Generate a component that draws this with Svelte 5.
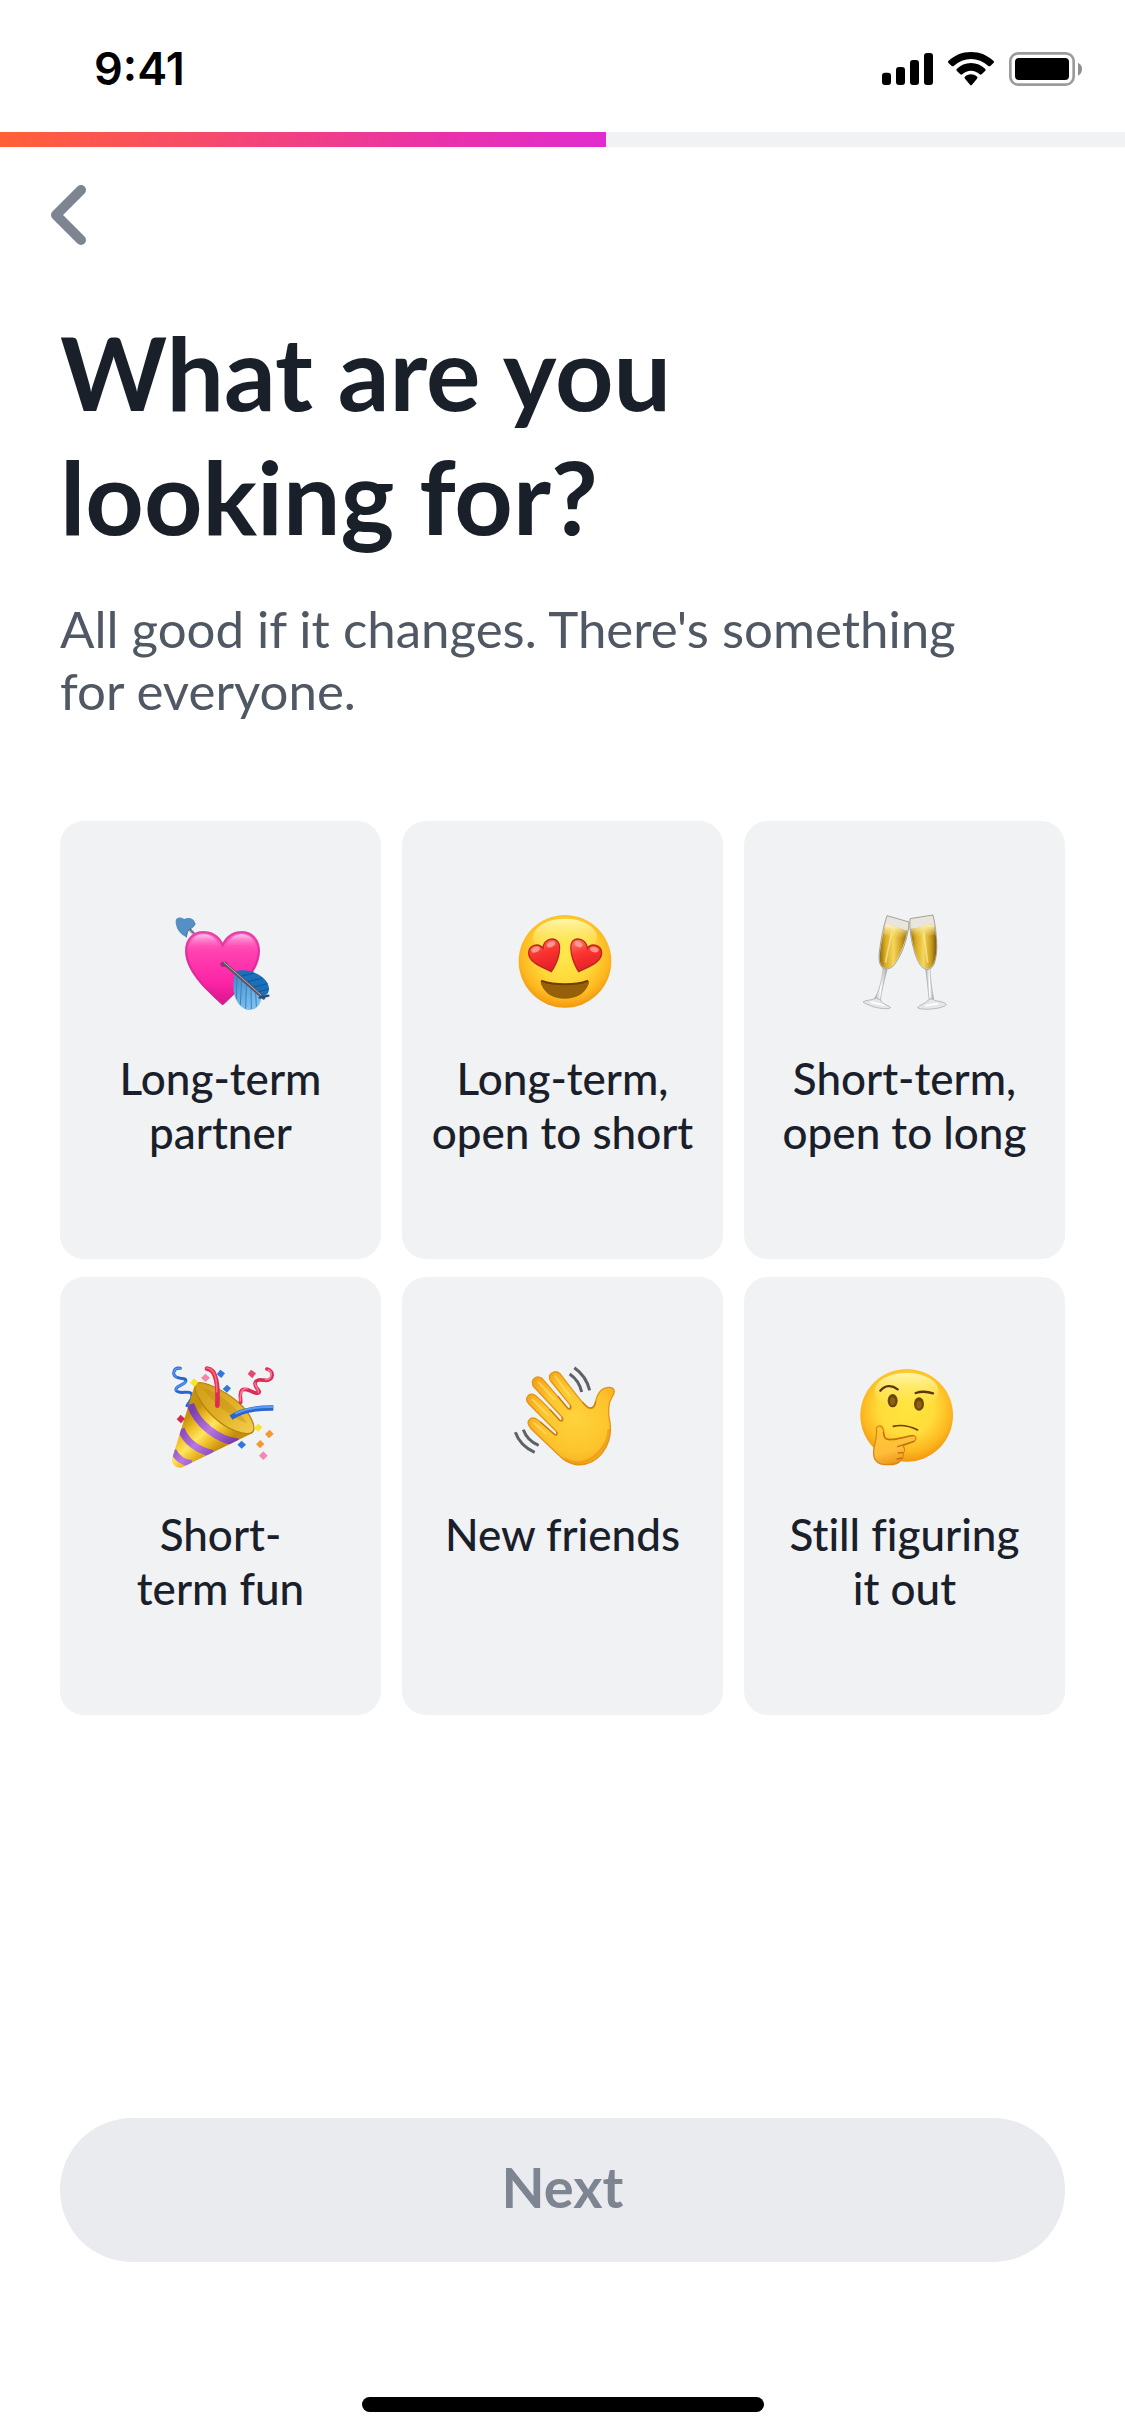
<script>
  const progress = 53.87;

  const options = [
    { icon: 'cupid', lines: ['Long-term', 'partner'] },
    { icon: 'heart-eyes', lines: ['Long-term,', 'open to short'] },
    { icon: 'glasses', lines: ['Short-term,', 'open to long'] },
    { icon: 'party', lines: ['Short-', 'term fun'] },
    { icon: 'wave', lines: ['New friends'] },
    { icon: 'thinking', lines: ['Still figuring', 'it out'] }
  ];

  let selected = $state(null);
</script>

{#snippet cupid()}
  <svg class="emoji" viewBox="-10 0 360 360" aria-hidden="true">
    <defs>
      <linearGradient id="cupid-fill" x1="0" y1="0" x2="0" y2="1">
        <stop offset="0" stop-color="#ff6fc6" />
        <stop offset="0.3" stop-color="#ff3fb0" />
        <stop offset="0.7" stop-color="#fb24a4" />
        <stop offset="1" stop-color="#d9128e" />
      </linearGradient>
      <linearGradient id="cupid-shine" x1="0" y1="0" x2="0" y2="1">
        <stop offset="0" stop-color="#ffc3ea" />
        <stop offset="1" stop-color="#ff5abb" stop-opacity="0" />
      </linearGradient>
      <linearGradient id="cupid-feather" x1="0" y1="0" x2="0.4" y2="1">
        <stop offset="0" stop-color="#3d87c6" />
        <stop offset="1" stop-color="#7cc0ef" />
      </linearGradient>
    </defs>
    <path d="M68 66 L92 90" stroke="#6d6f7c" stroke-width="9" />
    <path d="M72 74 L86 88" stroke="#d5d7dd" stroke-width="3" />
    <path d="M66 97 C44 86 34 68 34 48 C34 36 50 34 60 42 C72 36 90 40 92 54 C92 64 80 70 72 76 C68 82 68 92 66 97Z" fill="#5590c4" />
    <path d="M66 97 C68 88 68 80 74 74 C84 68 92 62 92 54" fill="none" stroke="#3c6fa3" stroke-width="3" />
    <path d="M175 301 C140 268 62 205 62 138 C62 100 86 78 116 78 C145 78 165 92 175 113 C186 92 205 78 232 78 C264 78 287 102 287 137 C287 205 210 268 175 301Z" fill="url(#cupid-fill)" />
    <path d="M175 296 C140 264 66 203 66 138 C66 102 89 82 116 82 C145 82 165 98 175 121 C186 98 205 82 232 82 C262 82 283 104 283 137 C283 203 208 266 175 296Z" fill="none" stroke="#c92a90" stroke-width="6" opacity="0.6" />
    <path d="M78 130 C78 100 96 88 116 88 C144 88 158 104 166 128 C140 118 106 118 78 130Z" fill="url(#cupid-shine)" />
    <path d="M184 128 C192 104 208 88 232 88 C254 88 272 102 272 130 C246 116 212 116 184 128Z" fill="url(#cupid-shine)" />
    <ellipse cx="179" cy="178" rx="11" ry="8" fill="#a10e6b" opacity="0.7" />
    <path d="M213 199 C250 186 312 212 314 250 C314 260 312 266 304 270 L292 276Z" fill="#1a70bb" />
    <path d="M210 203 L290 276 C292 296 276 314 256 315 C228 314 206 282 207 240Z" fill="url(#cupid-feather)" />
    <g fill="none" stroke="#3a82bd" stroke-width="3">
      <path d="M218 214 L216 282" /><path d="M232 226 L228 300" /><path d="M246 239 L244 311" />
      <path d="M260 252 L261 312" /><path d="M274 264 L276 304" />
    </g>
    <g fill="none" stroke="#0f5596" stroke-width="3">
      <path d="M232 213 L268 205" /><path d="M250 230 L294 220" /><path d="M268 246 L310 236" /><path d="M284 260 L313 252" />
    </g>
    <path d="M178 173 L298 279" stroke="#5c5360" stroke-width="10" stroke-linecap="round" />
    <path d="M178 171 L290 270" stroke="#c4a8b8" stroke-width="3" stroke-linecap="round" />
    <path d="M286 278 L312 272" stroke="#1b4f82" stroke-width="7" stroke-linecap="round" />
  </svg>
{/snippet}

{#snippet heartEyes()}
  <svg class="emoji" viewBox="-5 0 360 360" aria-hidden="true">
    <defs>
      <radialGradient id="love-face" cx="0.5" cy="0.42" r="0.6">
        <stop offset="0" stop-color="#ffe84d" />
        <stop offset="0.5" stop-color="#ffd83a" />
        <stop offset="0.8" stop-color="#fdb71f" />
        <stop offset="1" stop-color="#ee920f" />
      </radialGradient>
      <linearGradient id="love-shine" x1="0" y1="0" x2="0" y2="1">
        <stop offset="0" stop-color="#fff7ae" />
        <stop offset="1" stop-color="#ffe84d" stop-opacity="0" />
      </linearGradient>
      <linearGradient id="love-eye" x1="0.3" y1="0" x2="0.6" y2="1">
        <stop offset="0" stop-color="#ff7468" />
        <stop offset="0.4" stop-color="#fb3530" />
        <stop offset="1" stop-color="#e31d28" />
      </linearGradient>
    </defs>
    <circle cx="181" cy="169" r="139" fill="url(#love-face)" />
    <ellipse cx="181" cy="97" rx="96" ry="56" fill="url(#love-shine)" />
    <path d="M140 200 C118 188 72 174 72 144 C72 120 102 112 115 130 C116 108 136 98 152 104 C178 116 160 172 140 200Z" fill="url(#love-eye)" stroke="#b9261b" stroke-width="4" />
    <path d="M222 200 C204 172 186 116 210 104 C226 98 246 108 248 130 C260 112 291 120 291 144 C291 174 244 188 222 200Z" fill="url(#love-eye)" stroke="#b9261b" stroke-width="4" />
    <g fill="#ffb3a5" opacity="0.75">
      <ellipse cx="93" cy="134" rx="13" ry="8" transform="rotate(-25 93 134)" />
      <ellipse cx="139" cy="118" rx="13" ry="8" transform="rotate(-25 139 118)" />
      <ellipse cx="222" cy="118" rx="12" ry="8" transform="rotate(25 222 118)" />
      <ellipse cx="269" cy="134" rx="13" ry="8" transform="rotate(15 269 134)" />
    </g>
    <path d="M112 227 C150 240 212 240 248 227 C254 226 254 232 251 239 C240 266 214 281 180 281 C146 281 122 266 110 239 C107 231 108 226 112 227Z" fill="#96600b" />
    <path d="M112 228 C150 241 212 241 248 228" fill="none" stroke="#6e3d05" stroke-width="6" stroke-linecap="round" />
  </svg>
{/snippet}

{#snippet glasses()}
  <svg class="emoji" viewBox="-14 15 360 360" aria-hidden="true">
    <defs>
      <linearGradient id="wine" x1="0" y1="0" x2="1" y2="0">
        <stop offset="0" stop-color="#8e6a10" />
        <stop offset="0.2" stop-color="#d9ab22" />
        <stop offset="0.5" stop-color="#f5d65c" />
        <stop offset="0.8" stop-color="#c99a1c" />
        <stop offset="1" stop-color="#7c5a0c" />
      </linearGradient>
      <linearGradient id="stem" x1="0" y1="0" x2="1" y2="0">
        <stop offset="0" stop-color="#a9aaac" />
        <stop offset="0.5" stop-color="#ffffff" />
        <stop offset="1" stop-color="#a2a3a6" />
      </linearGradient>
      <linearGradient id="foam" x1="0" y1="0" x2="0" y2="1">
        <stop offset="0" stop-color="#fff6bf" />
        <stop offset="1" stop-color="#f2d66a" stop-opacity="0" />
      </linearGradient>
    </defs>
    <g>
      <path d="M100 204 C98 240 86 280 74 296 L92 302 C94 276 106 236 112 208Z" fill="url(#stem)" stroke="#a7a8aa" stroke-width="2" />
      <path d="M40 306 C50 298 68 302 80 294 C90 300 94 298 96 306 C104 314 120 318 123 323 C116 330 70 326 40 306Z" fill="#e6e7e8" stroke="#9fa0a3" stroke-width="2" />
      <path d="M66 307 L102 315" stroke="#ffffff" stroke-width="5" stroke-linecap="round" />
      <path d="M112 47 L178 66 C178 98 160 160 138 188 C128 206 112 210 100 204 C88 196 86 176 90 150 C94 116 102 76 112 47Z" fill="#e8e5dc" stroke="#a5a195" stroke-width="3" />
      <path d="M107 76 C128 72 150 88 173 92 C166 126 152 164 136 188 C126 204 112 208 101 202 C90 194 88 176 92 150 C96 122 101 96 107 76Z" fill="url(#wine)" />
      <path d="M107 76 C128 72 150 88 173 92 L167 116 L102 104Z" fill="url(#foam)" />
      <path d="M126 100 C120 130 112 160 108 186" fill="none" stroke="#fff2a6" stroke-width="5" stroke-linecap="round" opacity="0.6" />
    </g>
    <g>
      <path d="M228 206 C232 240 236 270 238 298 L252 298 C246 268 242 236 241 206Z" fill="url(#stem)" stroke="#a7a8aa" stroke-width="2" />
      <path d="M204 324 C208 314 228 312 236 300 C244 294 252 298 256 302 C270 304 286 306 290 314 C280 326 226 332 204 324Z" fill="#e6e7e8" stroke="#9fa0a3" stroke-width="2" />
      <path d="M228 317 L264 311" stroke="#ffffff" stroke-width="5" stroke-linecap="round" />
      <path d="M181 56 L250 45 C258 78 264 130 260 162 C256 192 250 206 234 208 C220 208 210 196 200 172 C188 140 178 90 181 56Z" fill="#e8e5dc" stroke="#a5a195" stroke-width="3" />
      <path d="M183 86 C206 90 232 66 253 76 C260 106 262 134 259 162 C255 190 248 204 234 206 C221 206 211 194 202 172 C192 146 185 114 183 86Z" fill="url(#wine)" />
      <path d="M183 86 C206 90 232 66 253 76 L257 104 L187 112Z" fill="url(#foam)" />
      <path d="M222 100 C226 130 230 160 234 186" fill="none" stroke="#fff2a6" stroke-width="5" stroke-linecap="round" opacity="0.6" />
    </g>
  </svg>
{/snippet}

{#snippet party()}
  <svg class="emoji" viewBox="4 18 360 360" aria-hidden="true">
    <defs>
      <linearGradient id="cone" gradientUnits="userSpaceOnUse" x1="80" y1="190" x2="170" y2="290">
        <stop offset="0" stop-color="#c8930c" />
        <stop offset="0.25" stop-color="#f0bf2a" />
        <stop offset="0.5" stop-color="#ffe65e" />
        <stop offset="0.75" stop-color="#eab822" />
        <stop offset="1" stop-color="#c48d0c" />
      </linearGradient>
      <linearGradient id="band" gradientUnits="userSpaceOnUse" x1="80" y1="190" x2="190" y2="290">
        <stop offset="0" stop-color="#7b3fae" />
        <stop offset="0.5" stop-color="#b877e2" />
        <stop offset="1" stop-color="#7c3fb0" />
      </linearGradient>
      <linearGradient id="mouth" x1="0" y1="0" x2="1" y2="1">
        <stop offset="0" stop-color="#d19d18" />
        <stop offset="0.5" stop-color="#e0ae26" />
        <stop offset="1" stop-color="#f5cf4c" />
      </linearGradient>
      <clipPath id="cone-shape">
        <path d="M106 88 C112 140 180 222 279 234 L68 337 C52 342 36 330 37 312Z" />
      </clipPath>
    </defs>
    <path d="M62 40 C42 36 36 58 50 66 C62 74 82 66 78 80 C72 92 44 92 49 106 C58 122 96 100 97 122 C98 136 88 140 82 152" fill="none" stroke="#2767d2" stroke-width="9" stroke-linecap="round" />
    <path d="M62 40 C42 36 36 58 50 66 M78 80 C72 92 44 92 49 106" fill="none" stroke="#5b98f3" stroke-width="4" stroke-linecap="round" />
    <path d="M106 88 C112 140 180 222 279 234 L68 337 C52 342 36 330 37 312Z" fill="url(#cone)" />
    <g clip-path="url(#cone-shape)" fill="none" stroke="url(#band)">
      <path d="M92 148 C112 206 172 256 236 262" stroke-width="23" />
      <path d="M64 222 C80 262 116 286 160 296" stroke-width="22" />
      <path d="M40 286 C50 308 70 322 96 326" stroke-width="20" />
    </g>
    <path d="M108 86 C124 74 190 102 236 142 C274 176 292 220 278 232 C258 244 204 226 162 186 C122 148 98 100 108 86Z" fill="url(#mouth)" stroke="#b58610" stroke-width="4" />
    <path d="M128 98 C160 104 226 146 262 204 C222 192 160 144 128 98Z" fill="#b68610" opacity="0.35" />
    <path d="M142 41 C170 42 176 90 173 152" fill="none" stroke="#dc2e55" stroke-width="14" stroke-linecap="round" />
    <path d="M142 39 C166 42 172 76 171 110" fill="none" stroke="#ff6785" stroke-width="5" stroke-linecap="round" />
    <path d="M214 188 C242 168 280 158 341 159" fill="none" stroke="#2b66cc" stroke-width="16" />
    <path d="M226 176 C254 162 290 154 341 156" fill="none" stroke="#5e9bf5" stroke-width="6" />
    <path d="M322 42 C346 48 340 78 318 76 C302 74 290 72 286 84 C284 100 306 108 296 114 C278 118 264 94 246 106 C238 114 244 128 243 142" fill="none" stroke="#d92c58" stroke-width="11" stroke-linecap="round" />
    <path d="M326 44 C340 52 336 74 318 74 M286 84 C286 96 300 106 296 112 M262 100 C242 102 242 118 242 138" fill="none" stroke="#ff7592" stroke-width="5" stroke-linecap="round" />
    <g>
      <path d="M103 70l13 12-12 14-13-13z" fill="#f5e52c" />
      <path d="M137 56l14 12-13 13-14-12z" fill="#f587a9" />
      <path d="M182 44l14 11-11 14-14-11z" fill="#2f76df" />
      <path d="M202 89l12 11-12 13-13-11z" fill="#2f76df" />
      <path d="M274 44l15 11-11 15-14-13z" fill="#e44973" />
      <path d="M63 179l13 12-12 14-13-12z" fill="#d3294f" />
      <path d="M296 206l12 11-12 13-13-12z" fill="#f5e52c" />
      <path d="M330 224l12 13-14 13-12-13z" fill="#f29a32" />
      <path d="M302 255l12 12-13 13-12-12z" fill="#f29a32" />
      <path d="M246 257l13 12-13 12-13-12z" fill="#2f76df" />
      <path d="M311 289l13 13-13 13-13-13z" fill="#f587b5" />
    </g>
  </svg>
{/snippet}

{#snippet wave()}
  <svg class="emoji" viewBox="-5 18 360 360" aria-hidden="true">
    <defs>
      <radialGradient id="hand" gradientUnits="userSpaceOnUse" cx="215" cy="190" r="170">
        <stop offset="0" stop-color="#ffd33c" />
        <stop offset="0.6" stop-color="#fdc42c" />
        <stop offset="1" stop-color="#f3a21a" />
      </radialGradient>
    </defs>
    <g fill="none" stroke="#5f6165" stroke-width="9">
      <path d="M209 38 C232 54 248 76 255 106" />
      <path d="M195 57 C214 70 226 88 231 111" />
      <path d="M32 232 C42 260 62 280 90 292" />
      <path d="M56 224 C64 246 80 262 102 271" />
    </g>
    <path d="M76 192 C88 184 98 194 108 202 L150 238 C158 244 160 236 156 230 L72 146 C58 130 72 112 90 120 C104 130 142 170 166 196 C174 202 178 194 172 186 L88 96 C74 76 94 58 112 70 L190 160 C198 166 202 158 198 152 L138 78 C126 58 150 42 166 56 C190 88 222 130 244 154 C256 166 268 162 272 144 C276 122 286 96 316 97 C334 100 330 116 322 126 C308 148 310 176 316 204 C324 258 296 300 262 320 C226 338 190 328 166 304 L80 222 C70 210 66 200 76 192Z" fill="url(#hand)" stroke="#e39514" stroke-width="4" stroke-linejoin="round" />
    <g fill="none" stroke="#c97b10" stroke-width="4" stroke-linecap="round">
      <path d="M108 202 L150 239 Q158 242 156 232" />
      <path d="M136 164 L166 197 Q174 200 172 188" />
      <path d="M160 124 L190 161 Q198 164 197 153" />
      <path d="M234 142 Q264 176 273 140" />
    </g>
    <g fill="none" stroke="#ffe06a" stroke-width="7" stroke-linecap="round" opacity="0.6">
      <path d="M88 204 L124 236" /><path d="M84 134 L130 180" /><path d="M102 82 L150 134" /><path d="M152 64 L196 124" />
    </g>
    <path d="M182 312 C236 348 310 290 312 226" fill="none" stroke="#e38f12" stroke-width="8" stroke-linecap="round" opacity="0.55" />
  </svg>
{/snippet}

{#snippet thinking()}
  <svg class="emoji" viewBox="-14 18 360 360" aria-hidden="true">
    <defs>
      <radialGradient id="think-face" cx="0.5" cy="0.42" r="0.6">
        <stop offset="0" stop-color="#ffe53c" />
        <stop offset="0.5" stop-color="#ffdc3a" />
        <stop offset="0.8" stop-color="#fdb71f" />
        <stop offset="1" stop-color="#ee920f" />
      </radialGradient>
      <linearGradient id="think-shine" x1="0" y1="0" x2="0" y2="1">
        <stop offset="0" stop-color="#fff7ae" />
        <stop offset="1" stop-color="#ffe84d" stop-opacity="0" />
      </linearGradient>
      <linearGradient id="think-hand" x1="0" y1="0" x2="0.3" y2="1">
        <stop offset="0" stop-color="#ffca35" />
        <stop offset="0.7" stop-color="#ffbe3a" />
        <stop offset="1" stop-color="#f09a1e" />
      </linearGradient>
    </defs>
    <circle cx="171" cy="181" r="139" fill="url(#think-face)" />
    <ellipse cx="171" cy="108" rx="96" ry="54" fill="url(#think-shine)" />
    <ellipse cx="129" cy="137" rx="15" ry="20" fill="#6b4507" />
    <ellipse cx="129" cy="139" rx="8" ry="12" fill="#8d6112" />
    <ellipse cx="208" cy="147" rx="15" ry="20" fill="#6b4507" />
    <ellipse cx="208" cy="149" rx="8" ry="12" fill="#8d6112" />
    <path d="M92 107 C106 90 126 89 144 103" fill="none" stroke="#5d3505" stroke-width="7" stroke-linecap="round" />
    <path d="M198 114 C214 109 232 109 250 115" fill="none" stroke="#5d3505" stroke-width="7" stroke-linecap="round" />
    <path d="M131 214 C156 208 182 214 204 225" fill="none" stroke="#6b3d08" stroke-width="5" stroke-linecap="round" />
    <path d="M80 220 C86 208 98 212 101 224 C104 238 100 248 110 252 C134 256 164 246 188 241 C202 242 202 254 190 261 L160 273 C166 280 166 290 160 296 C164 304 160 312 152 316 C146 328 120 330 100 328 C80 326 70 310 72 288 C74 264 84 246 80 220Z" fill="url(#think-hand)" stroke="#d98816" stroke-width="4" stroke-linejoin="round" />
    <g fill="none" stroke="#c26f10" stroke-width="4" stroke-linecap="round">
      <path d="M101 232 C103 250 110 256 126 254 C150 252 170 244 190 242" />
      <path d="M144 275 L192 259" /><path d="M146 294 L160 293" /><path d="M142 312 L156 309" />
    </g>
  </svg>
{/snippet}

<main class="screen">
  <header class="status">
    <time class="clock">9:41</time>
    <div class="indicators">
      <svg width="51" height="34" viewBox="66 66 153 102" role="img" aria-label="Signal strength">
        <rect x="66" y="128" width="27" height="37" rx="9" />
        <rect x="108" y="111" width="27" height="54" rx="9" />
        <rect x="150" y="90" width="27" height="75" rx="9" />
        <rect x="192" y="69" width="27" height="96" rx="9" />
      </svg>
      <svg width="46" height="34" viewBox="264 66 138 102" role="img" aria-label="Wi-Fi">
        <path d="M333 66 C360 66 382 76 401 93 Q403 96 401 98 L391 108 Q388 110 385 108 C370 94 352 87 333 87 C314 87 296 94 281 108 Q278 110 275 108 L265 98 Q263 96 265 93 C284 76 306 66 333 66Z" />
        <path d="M333 99 C350 99 364 106 376 117 Q378 120 376 122 L365 133 Q362 135 359 133 C351 126 343 122 333 122 C323 122 315 126 307 133 Q304 135 301 133 L290 122 Q288 120 290 117 C302 106 316 99 333 99Z" />
        <path d="M333 133 C341 133 347 136 352 141 Q353 144 351 146 L336 164 Q333 167 330 164 L315 146 Q313 144 314 141 C319 136 325 133 333 133Z" />
      </svg>
      <svg width="74" height="34" viewBox="447 66 222 102" role="img" aria-label="Battery full">
        <rect x="451" y="70" width="190" height="94" rx="24" fill="none" stroke="#9b9b9b" stroke-width="8" />
        <rect x="465" y="84" width="162" height="66" rx="12" />
        <path d="M654 98 Q666 104 666 117 Q666 131 654 137Z" fill="#8f8f8f" />
      </svg>
    </div>
  </header>

  <div class="progress" role="progressbar" aria-label="Profile setup" aria-valuenow={progress} aria-valuemin="0" aria-valuemax="100">
    <div class="bar" style="width: {progress}%"></div>
  </div>

  <nav class="nav">
    <button class="back" type="button" aria-label="Back">
      <svg width="36" height="60" viewBox="0 0 36 60" aria-hidden="true">
        <path d="M31 5 L6 30 L31 55" fill="none" stroke="#7c8591" stroke-width="10" stroke-linecap="round" stroke-linejoin="round" />
      </svg>
    </button>
  </nav>

  <section class="content">
    <h1>What are you<br />looking for?</h1>
    <p class="lead">All good if it changes. There's something for everyone.</p>

    <div class="grid">
      {#each options as option}
        <button
          class="card"
          type="button"
          aria-pressed={selected === option.icon}
          onclick={() => (selected = option.icon)}
        >
          {#if option.icon === 'cupid'}
            {@render cupid()}
          {:else if option.icon === 'heart-eyes'}
            {@render heartEyes()}
          {:else if option.icon === 'glasses'}
            {@render glasses()}
          {:else if option.icon === 'party'}
            {@render party()}
          {:else if option.icon === 'wave'}
            {@render wave()}
          {:else}
            {@render thinking()}
          {/if}
          <span class="label">
            {#each option.lines as line}
              <span class="line">{line}</span>
            {/each}
          </span>
        </button>
      {/each}
    </div>
  </section>

  <footer class="footer">
    <button class="next" type="button" disabled={selected === null}>Next</button>
    <div class="home"></div>
  </footer>
</main>

<style>
  :global(body) {
    background: #ffffff;
  }

  .screen {
    box-sizing: border-box;
    min-height: 100vh;
    display: flex;
    flex-direction: column;
    color: #1a202a;
    font-family: Lato, 'Open Sans', sans-serif;
    font-variant-ligatures: no-common-ligatures;
  }

  button {
    margin: 0;
    border: 0;
    color: inherit;
    font: inherit;
    font-variant-ligatures: inherit;
    cursor: pointer;
  }

  svg {
    display: block;
  }

  .status {
    display: flex;
    align-items: center;
    justify-content: space-between;
    height: 132px;
    padding: 6px 42px 0 94px;
    box-sizing: border-box;
    color: #000000;
  }

  .clock {
    font: 600 45px/52px Inter, sans-serif;
  }

  .indicators {
    display: flex;
    align-items: center;
    gap: 15px;
  }

  .progress {
    height: 15px;
    background: #f0f2f4;
  }

  .bar {
    height: 100%;
    background: linear-gradient(90deg, #ff6036, #ea33a5 70%, #e02cd0);
  }

  .nav {
    padding: 26px 38px 0;
  }

  .back {
    padding: 12px;
    background: none;
  }

  .content {
    padding: 53px 60px 0;
  }

  h1 {
    margin: 0;
    font-size: 102px;
    line-height: 124px;
    font-weight: 700;
  }

  .lead {
    margin: 40px 0 0;
    padding-right: 60px;
    color: #505864;
    font-size: 51px;
    line-height: 62px;
  }

  .grid {
    display: grid;
    grid-template-columns: repeat(3, 1fr);
    gap: 18px 21px;
    margin-top: 99px;
  }

  .card {
    display: flex;
    flex-direction: column;
    align-items: center;
    min-height: 438px;
    padding: 84px 0 72px;
    border-radius: 24px;
    background: #f0f2f4;
  }

  .emoji {
    width: 120px;
    height: 120px;
  }

  .label {
    margin-top: 26px;
    font-size: 44px;
    line-height: 54px;
    font-weight: 500;
    text-align: center;
  }

  .line {
    display: block;
    white-space: nowrap;
  }

  .footer {
    display: flex;
    flex-direction: column;
    align-items: center;
    gap: 135px;
    margin-top: auto;
    padding: 0 60px 24px;
  }

  .next {
    width: 100%;
    height: 144px;
    padding: 0 0 6px;
    border-radius: 72px;
    background: #eaebef;
    color: #7c8591;
    font-size: 56px;
    line-height: 64px;
    font-weight: 700;
  }

  .home {
    width: 40%;
    max-width: 402px;
    height: 15px;
    border-radius: 8px;
    background: #000000;
  }
</style>
